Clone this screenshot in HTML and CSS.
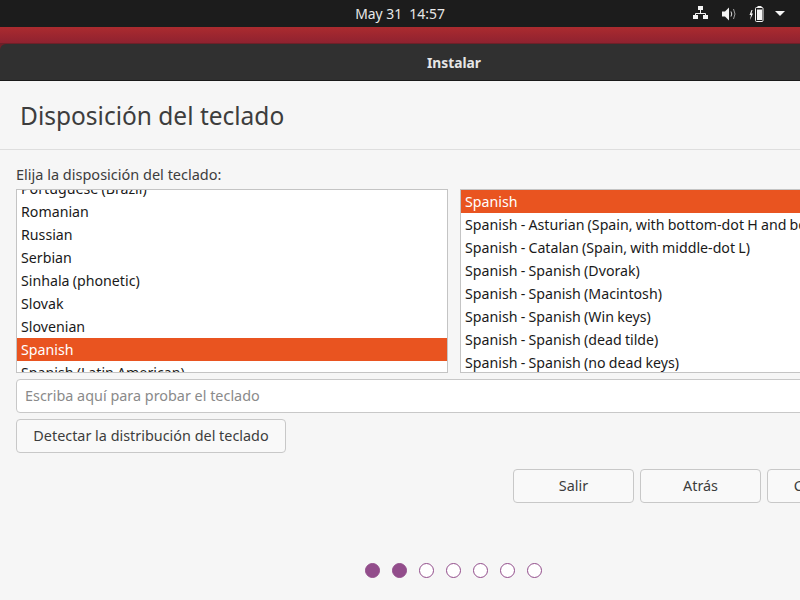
FILE: index.html
```html
<!DOCTYPE html>
<html>
<head>
  <meta charset="utf-8">
  <title>Instalar</title>
  <link rel="stylesheet" href="styles.css">
</head>
<body>
  <div class="topbar">
    <div class="clock">May 31&nbsp;&nbsp;14:57</div>
    <div class="tray">
      <svg class="tray-net" width="15" height="13" viewBox="0 0 15 13">
        <path fill="#f4f4f4" d="M5 0h5v4H5zM0 9h5v4H0zM10 9h5v4h-5z"/>
        <path fill="none" stroke="#f4f4f4" d="M7.500 4v3M2.500 9V7.500h10V9"/>
      </svg>
      <svg class="tray-vol" width="14" height="14" viewBox="0 0 14 14">
        <path fill="#f4f4f4" d="M0 4.500h3L7 .5v13l-4-4H0z"/>
        <path fill="none" stroke="#e0e0e0" d="M9 4.500q1.500 2.500 0 5"/>
        <path fill="none" stroke="#a0a0a0" d="M11.500 2q3 5 0 10"/>
      </svg>
      <svg class="tray-bat" width="15" height="16" viewBox="0 0 15 16">
        <path fill="#f4f4f4" d="M2.500 4 .5 9H2l-1 5 3-6.500H2.500L3.500 4z"/>
        <rect x="6.500" y="1.500" width="7.500" height="14" rx="1" fill="none" stroke="#f4f4f4"/>
        <path fill="#f4f4f4" d="M8.500 0h4v1h-4zM8 3.500h5v10.500H8z"/>
      </svg>
      <svg class="tray-arrow" width="10" height="5" viewBox="0 0 10 5">
        <path fill="#f4f4f4" d="M0 0h10L5 5z"/>
      </svg>
    </div>
  </div>
  <div class="desktop"></div>

  <div class="window">
    <div class="titlebar-back">
      <div class="titlebar">Instalar</div>
    </div>
    <div class="page-head">
      <h1>Disposición del teclado</h1>
    </div>
    <div class="content">
      <label class="choose">Elija la disposición del teclado:</label>
      <div class="lists">
        <div class="listbox left">
          <ul class="scrolled">
            <li>Portuguese (Brazil)</li>
            <li>Romanian</li>
            <li>Russian</li>
            <li>Serbian</li>
            <li>Sinhala (phonetic)</li>
            <li>Slovak</li>
            <li>Slovenian</li>
            <li class="selected">Spanish</li>
            <li>Spanish (Latin American)</li>
          </ul>
        </div>
        <div class="listbox right">
          <ul>
            <li class="selected">Spanish</li>
            <li>Spanish - Asturian (Spain, with bottom-dot H and bottom-dot L)</li>
            <li>Spanish - Catalan (Spain, with middle-dot L)</li>
            <li>Spanish - Spanish (Dvorak)</li>
            <li>Spanish - Spanish (Macintosh)</li>
            <li>Spanish - Spanish (Win keys)</li>
            <li>Spanish - Spanish (dead tilde)</li>
            <li>Spanish - Spanish (no dead keys)</li>
          </ul>
        </div>
      </div>
      <input class="try" type="text" placeholder="Escriba aquí para probar el teclado">
      <button class="btn detect">Detectar la distribución del teclado</button>
      <div class="actions">
        <button class="btn">Salir</button>
        <button class="btn">Atrás</button>
        <button class="btn">Continuar</button>
      </div>
    </div>
    <div class="dots">
      <span class="dot done"></span>
      <span class="dot done"></span>
      <span class="dot"></span>
      <span class="dot"></span>
      <span class="dot"></span>
      <span class="dot"></span>
      <span class="dot"></span>
    </div>
  </div>
</body>
</html>
```

FILE: styles.css
```css
* {
  box-sizing: border-box;
}

html, body {
  height: 600px;
  overflow: hidden;
}

body {
  margin: 0;
  width: 800px;
  background-color: #f6f6f6;
  font-family: "Noto Sans", "Open Sans", sans-serif;
  font-size: 14.4px;
  color: #3d3d3d;
}

.topbar {
  height: 27px;
  background-color: #1c1c1c;
  color: #e8e8e8;
  display: grid;
  grid-template-columns: 1fr auto 1fr;
  align-items: center;
}

.clock {
  grid-column: 2;
  font-size: 13.9px;
}

.tray {
  grid-column: 3;
  justify-self: end;
  display: flex;
  align-items: center;
  padding-right: 15px;
}

.tray-net {
  margin-right: 14px;
  margin-bottom: 2px;
}

.tray-vol {
  margin-right: 13px;
}

.tray-bat {
  margin-right: 11px;
}

.desktop {
  height: 17px;
  background: linear-gradient(#ab2b2f, #8f2230);
  border-bottom: 1px solid #6e2028;
}

.window {
  width: 908px;
}

.titlebar-back {
  background-color: #6e2028;
}

.titlebar {
  height: 37px;
  background-color: #303030;
  border-bottom: 1px solid #1a1a1a;
  border-radius: 6px 6px 0 0;
  color: #e6e6e6;
  font-weight: 700;
  font-size: 13.8px;
  line-height: 37px;
  text-align: center;
}

.page-head {
  height: 69px;
  padding-left: 20px;
  border-bottom: 1px solid #dedede;
  display: flex;
  align-items: center;
}

h1 {
  margin: 0;
  font-size: 24.5px;
  font-weight: 400;
  color: #3d3d3d;
}

.content {
  padding: 16px 16px 0;
}

.choose {
  display: block;
  height: 23px;
  line-height: 16px;
  font-size: 14.5px;
}

.lists {
  display: flex;
  gap: 12px;
}

.listbox {
  height: 184px;
  background-color: #fff;
  border: 1px solid #c4c4c4;
  overflow: hidden;
  color: #1a1a1a;
  font-size: 14.2px;
  word-spacing: -0.5px;
}

.left {
  width: 432px;
}

.right {
  flex: 1;
}

ul {
  list-style: none;
  margin: 0;
  padding: 0;
}

.scrolled {
  margin-top: -13px;
}

li {
  height: 23px;
  line-height: 23px;
  padding-left: 4px;
  white-space: nowrap;
}

li.selected {
  background-color: #e95420;
  color: #fff;
}

.try {
  display: block;
  width: 100%;
  height: 34px;
  margin-top: 6px;
  padding: 0 8px 2px;
  background-color: #fff;
  border: 1px solid #c8c8c8;
  border-radius: 4px;
  font: inherit;
  color: #3d3d3d;
}

.try::placeholder {
  color: #8a8a8a;
  opacity: 1;
}

.btn {
  height: 34px;
  background-color: #f9f9f9;
  border: 1px solid #c8c8c8;
  border-radius: 4px;
  font: inherit;
  color: #3d3d3d;
  padding: 0 0 2px;
}

.detect {
  display: block;
  width: 270px;
  margin-top: 6px;
}

.actions {
  display: flex;
  justify-content: flex-end;
  gap: 6px;
  margin-top: 16px;
  margin-right: 4px;
}

.actions .btn {
  width: 121px;
}

.dots {
  display: flex;
  justify-content: center;
  gap: 12px;
  margin-top: 60px;
  padding-right: 2px;
}

.dot {
  width: 15px;
  height: 15px;
  border: 1.5px solid #924d8b;
  border-radius: 50%;
  background-color: #fff;
}

.dot.done {
  background-color: #924d8b;
}
```
